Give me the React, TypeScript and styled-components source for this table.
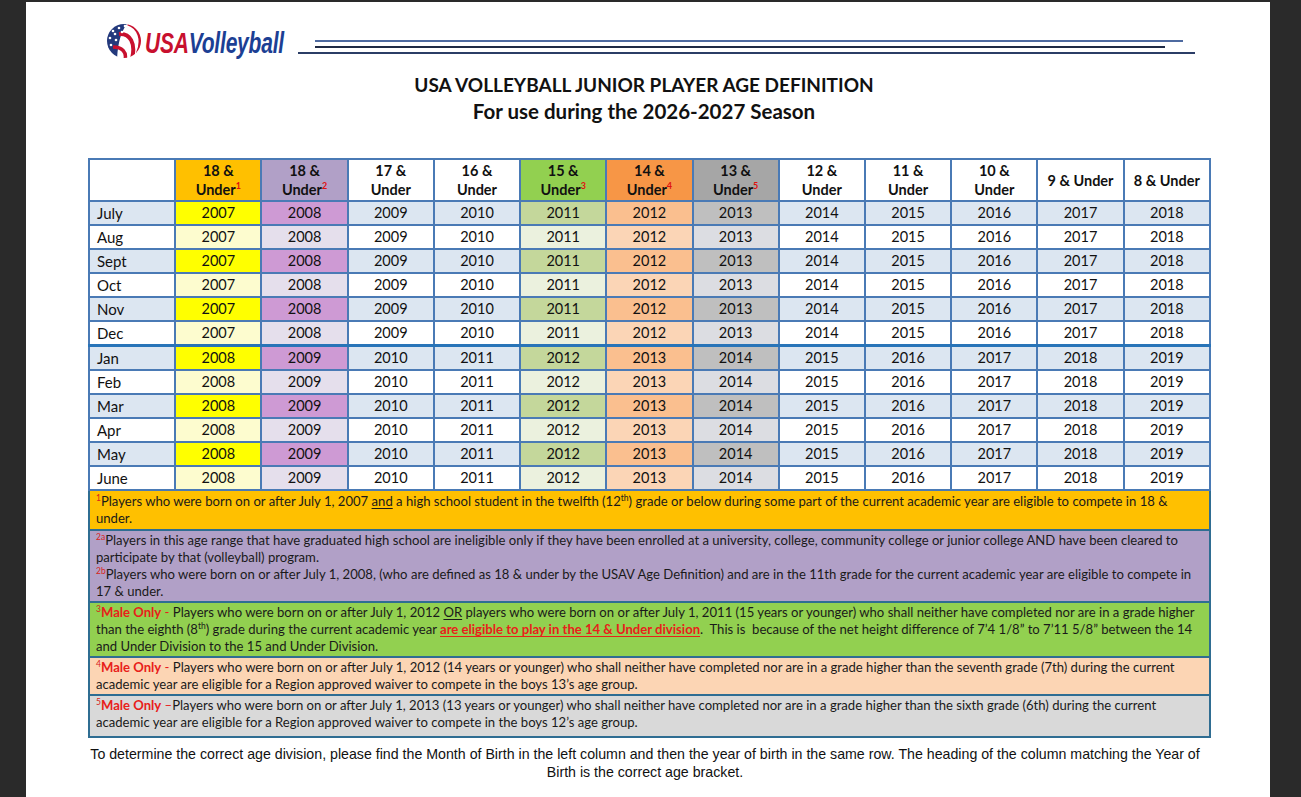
import React from "react";
import styled, { createGlobalStyle } from "styled-components";

const GlobalStyle = createGlobalStyle`
  html, body {
    margin: 0;
    padding: 0;
    background: #2a2a2a;
  }
  body {
    font-family: Lato, "Open Sans", sans-serif;
    color: #111;
  }
`;

const Viewer = styled.div`
  height: 797px;
  overflow: hidden;
  padding-top: 2px;
  box-sizing: border-box;
`;

const Page = styled.div`
  margin-left: 26px;
  width: 1244px;
  height: 795px;
  background: #fff;
  padding-top: 18px;
  box-sizing: border-box;
`;

const Masthead = styled.header`
  display: flex;
  align-items: flex-start;
  gap: 11px;
  padding-left: 79px;
  height: 40px;
`;

const Rules = styled.div`
  display: flex;
  flex-direction: column;
  gap: 4px;
  margin-top: 20px;
`;

const Rule = styled.div<{ $indent: number; $width: number; $color: string }>`
  height: 2px;
  margin-left: ${(p) => p.$indent}px;
  width: ${(p) => p.$width}px;
  background: ${(p) => p.$color};
`;

const Title = styled.h1`
  margin: 12px 0 0;
  padding-right: 8px;
  text-align: center;
  font: 700 19px/26px Lato, sans-serif;
  color: #111;
`;

const Subtitle = styled.span`
  font-size: 20.5px;
`;

const Grid = styled.table`
  margin: 33px 0 0 62px;
  width: 1123px;
  border-collapse: collapse;
  table-layout: fixed;
  border: 2px solid #4a7ab5;
`;

const HeadCell = styled.th<{ $bg: string }>`
  height: 40px;
  padding: 0;
  border: 2px solid #4a7ab5;
  background: ${(p) => p.$bg};
  font: 700 14.5px/19px Lato, sans-serif;
  color: #111;
  text-align: center;
  vertical-align: middle;

  sup {
    color: #e01010;
    font-size: 9px;
    line-height: 0;
  }
`;

const Row = styled.tr<{ $split?: boolean }>`
  td {
    border-top: ${(p) => (p.$split ? "3px solid #2874b8" : "2px solid #4a7ab5")};
  }
`;

const MonthCell = styled.td<{ $bg: string }>`
  height: 22px;
  padding: 0 0 0 7px;
  border: 2px solid #4a7ab5;
  background: ${(p) => p.$bg};
  font: 400 15px/20px Lato, sans-serif;
  color: #111;
  text-align: left;
`;

const YearCell = styled.td<{ $bg: string }>`
  height: 22px;
  padding: 0;
  border: 2px solid #4a7ab5;
  background: ${(p) => p.$bg};
  font: 400 14.5px/20px Lato, sans-serif;
  color: #111;
  text-align: center;
`;

const Notes = styled.section`
  margin-left: 62px;
  width: 1123px;
  border: 2px solid #2f6d92;
  border-top: none;
  box-sizing: border-box;
`;

const Note = styled.div<{ $bg: string; $extra?: number }>`
  background: ${(p) => p.$bg};
  padding: 1px 6px ${(p) => 1 + (p.$extra ?? 0)}px;
  border-top: 2px solid #2f6d92;
  font: 400 13.1px/17px Lato, sans-serif;
  color: #1a1a1a;
  white-space: nowrap;

  &:first-child {
    border-top: none;
    padding-top: 2px;
    padding-bottom: 2px;
  }

  sup {
    font-size: 8.5px;
    line-height: 0;
  }
`;

const Mark = styled.sup`
  color: #d8231a;
`;

const Male = styled.b`
  color: #e8201a;
`;

const Dash = styled.span`
  color: #e8201a;
`;

const Under = styled.u`
  text-underline-offset: 2px;
`;

const Alert = styled.b`
  color: #e8201a;
  text-decoration: underline;
  text-underline-offset: 2px;
`;

const Footer = styled.p`
  margin: 7px 0 0 62px;
  width: 1114px;
  text-align: center;
  font: 400 14.2px/18px "Liberation Sans", Arial, sans-serif;
  color: #111;
  white-space: nowrap;
`;

type Column = { top: string; bottom: string; mark?: string; bg: string; strong: string; pale: string };

const columns: Column[] = [
  { top: "18 &", bottom: "Under", mark: "1", bg: "#ffc000", strong: "#ffff00", pale: "#fdfccf" },
  { top: "18 &", bottom: "Under", mark: "2", bg: "#b1a0c7", strong: "#ce9ad4", pale: "#e5dfec" },
  { top: "17 &", bottom: "Under", bg: "#fff", strong: "#dce6f1", pale: "#fff" },
  { top: "16 &", bottom: "Under", bg: "#fff", strong: "#dce6f1", pale: "#fff" },
  { top: "15 &", bottom: "Under", mark: "3", bg: "#92d050", strong: "#c4d79b", pale: "#ebf1de" },
  { top: "14 &", bottom: "Under", mark: "4", bg: "#f79646", strong: "#fabf8f", pale: "#fbd5b6" },
  { top: "13 &", bottom: "Under", mark: "5", bg: "#a6a6a6", strong: "#bfbfbf", pale: "#dcdde2" },
  { top: "12 &", bottom: "Under", bg: "#fff", strong: "#dce6f1", pale: "#fff" },
  { top: "11 &", bottom: "Under", bg: "#fff", strong: "#dce6f1", pale: "#fff" },
  { top: "10 &", bottom: "Under", bg: "#fff", strong: "#dce6f1", pale: "#fff" },
  { top: "9 & Under", bottom: "", bg: "#fff", strong: "#dce6f1", pale: "#fff" },
  { top: "8 & Under", bottom: "", bg: "#fff", strong: "#dce6f1", pale: "#fff" },
];

const months = ["July", "Aug", "Sept", "Oct", "Nov", "Dec", "Jan", "Feb", "Mar", "Apr", "May", "June"];

const Logo = () => (
  <svg width="182" height="40" viewBox="0 0 182 40">
    <defs>
      <clipPath id="ball">
        <circle cx="19" cy="21" r="17" />
      </clipPath>
    </defs>
    <g clipPath="url(#ball)">
      <rect x="0" y="0" width="40" height="40" fill="#fff" />
      <path d="M0 0 H25 C18 8 13 18 12 40 H0 Z" fill="#23397c" />
      <path d="M23 3 C35 7 39 20 33 34" stroke="#c8102e" strokeWidth="4.5" fill="none" />
      <path d="M14 14 C25 13 31 23 27 39" stroke="#c8102e" strokeWidth="4" fill="none" />
      <path d="M8 27 C17 27 22 32 20 40" stroke="#c8102e" strokeWidth="3.5" fill="none" />
      {[
        [8, 11], [14, 8], [20, 6], [5, 18], [11, 20], [17, 12], [6, 25], [10, 14],
      ].map(([x, y], i) => (
        <circle key={i} cx={x} cy={y} r="1.3" fill="#fff" />
      ))}
    </g>
    <text
      transform="translate(40 33) scale(1 1.38)"
      fontFamily="Liberation Sans, Arial, sans-serif"
      fontWeight="700"
      fontStyle="italic"
      fontSize="21"
      letterSpacing="-0.2"
    >
      <tspan fill="#c8102e">USA</tspan>
      <tspan fill="#1c3f94">Volleyball</tspan>
    </text>
  </svg>
);

export default function App() {
  return (
    <Viewer>
      <GlobalStyle />
      <Page>
        <Masthead>
          <Logo />
          <Rules>
            <Rule $indent={17} $width={868} $color="#4e6aa0" />
            <Rule $indent={17} $width={850} $color="#1f2a44" />
            <Rule $indent={0} $width={897} $color="#2b3d66" />
          </Rules>
        </Masthead>

        <Title>
          USA VOLLEYBALL JUNIOR PLAYER AGE DEFINITION
          <br />
          <Subtitle>For use during the 2026-2027 Season</Subtitle>
        </Title>

        <Grid>
          <thead>
            <tr>
              <HeadCell $bg="#fff" />
              {columns.map((c, i) => (
                <HeadCell key={i} $bg={c.bg}>
                  {c.top}
                  {c.bottom && <br />}
                  {c.bottom}
                  {c.mark && <sup>{c.mark}</sup>}
                </HeadCell>
              ))}
            </tr>
          </thead>
          <tbody>
            {months.map((m, r) => {
              const strong = r % 2 === 0;
              const base = r < 6 ? 2007 : 2008;
              return (
                <Row key={m} $split={r === 6}>
                  <MonthCell $bg={strong ? "#dce6f1" : "#fff"}>{m}</MonthCell>
                  {columns.map((c, i) => (
                    <YearCell key={i} $bg={strong ? c.strong : c.pale}>
                      {base + i}
                    </YearCell>
                  ))}
                </Row>
              );
            })}
          </tbody>
        </Grid>

        <Notes>
          <Note $bg="#ffc000">
            <Mark>1</Mark>Players who were born on or after July 1, 2007 <Under>and</Under> a high school student in the twelfth (12<sup>th</sup>) grade or below during some part of the current academic year are eligible to compete in 18 &amp;
            <br />
            under.
          </Note>
          <Note $bg="#b1a0c7">
            <Mark>2a</Mark>Players in this age range that have graduated high school are ineligible only if they have been enrolled at a university, college, community college or junior college AND have been cleared to
            <br />
            participate by that (volleyball) program.
            <br />
            <Mark>2b</Mark>Players who were born on or after July 1, 2008, (who are defined as 18 &amp; under by the USAV Age Definition) and are in the 11th grade for the current academic year are eligible to compete in
            <br />
            17 &amp; under.
          </Note>
          <Note $bg="#92d050">
            <Mark>3</Mark>
            <Male>Male Only</Male>
            <Dash> - </Dash>Players who were born on or after July 1, 2012 <Under>OR</Under> players who were born on or after July 1, 2011 (15 years or younger) who shall neither have completed nor are in a grade higher
            <br />
            than the eighth (8<sup>th</sup>) grade during the current academic year <Alert>are eligible to play in the 14 &amp; Under division</Alert>.&nbsp; This is&nbsp; because of the net height difference of 7’4 1/8” to 7’11 5/8” between the 14
            <br />
            and Under Division to the 15 and Under Division.
          </Note>
          <Note $bg="#fcd5b4">
            <Mark>4</Mark>
            <Male>Male Only</Male>
            <Dash> - </Dash>Players who were born on or after July 1, 2012 (14 years or younger) who shall neither have completed nor are in a grade higher than the seventh grade (7th) during the current
            <br />
            academic year are eligible for a Region approved waiver to compete in the boys 13’s age group.
          </Note>
          <Note $bg="#d9d9d9" $extra={4}>
            <Mark>5</Mark>
            <Male>Male Only</Male>
            <Dash> –</Dash>Players who were born on or after July 1, 2013 (13 years or younger) who shall neither have completed nor are in a grade higher than the sixth grade (6th) during the current
            <br />
            academic year are eligible for a Region approved waiver to compete in the boys 12’s age group.
          </Note>
        </Notes>

        <Footer>
          To determine the correct age division, please find the Month of Birth in the left column and then the year of birth in the same row. The heading of the column matching the Year of
          <br />
          Birth is the correct age bracket.
        </Footer>
      </Page>
    </Viewer>
  );
}
